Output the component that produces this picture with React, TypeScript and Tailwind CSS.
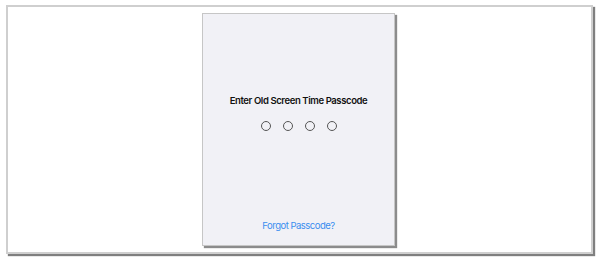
import React from 'react';

const App: React.FC = () => {
  return (
    <div className="w-[600px] h-[264px] bg-white pt-[5px] pl-[6px]" style={{ fontFamily: 'Inter, "Liberation Sans", sans-serif' }}>
      <div className="w-[587px] h-[249px] bg-white border-2 border-[#cfcfcf] shadow-[2px_2px_1px_rgba(0,0,0,0.5)] flex justify-center pt-[6px] pr-[2px]">
        <div className="w-[193px] h-[233px] bg-[#f1f1f6] border border-[#c6c6c6] shadow-[2px_2px_1px_rgba(0,0,0,0.45)] flex flex-col items-center">
          <h1 className="mt-[81px] text-[9.5px] leading-[12px] font-semibold text-[#111] tracking-[-0.4px]">
            Enter Old Screen Time Passcode
          </h1>
          <div className="mt-[14px] flex gap-[12px]">
            {[0, 1, 2, 3].map((i) => (
              <span key={i} className="block w-[10px] h-[10px] rounded-full border border-[#555]" />
            ))}
          </div>
          <button className="mt-auto mb-[13px] text-[9.5px] leading-[12px] text-[#3a8ef0] tracking-[-0.5px]">
            Forgot Passcode?
          </button>
        </div>
      </div>
    </div>
  );
};

export default App;
